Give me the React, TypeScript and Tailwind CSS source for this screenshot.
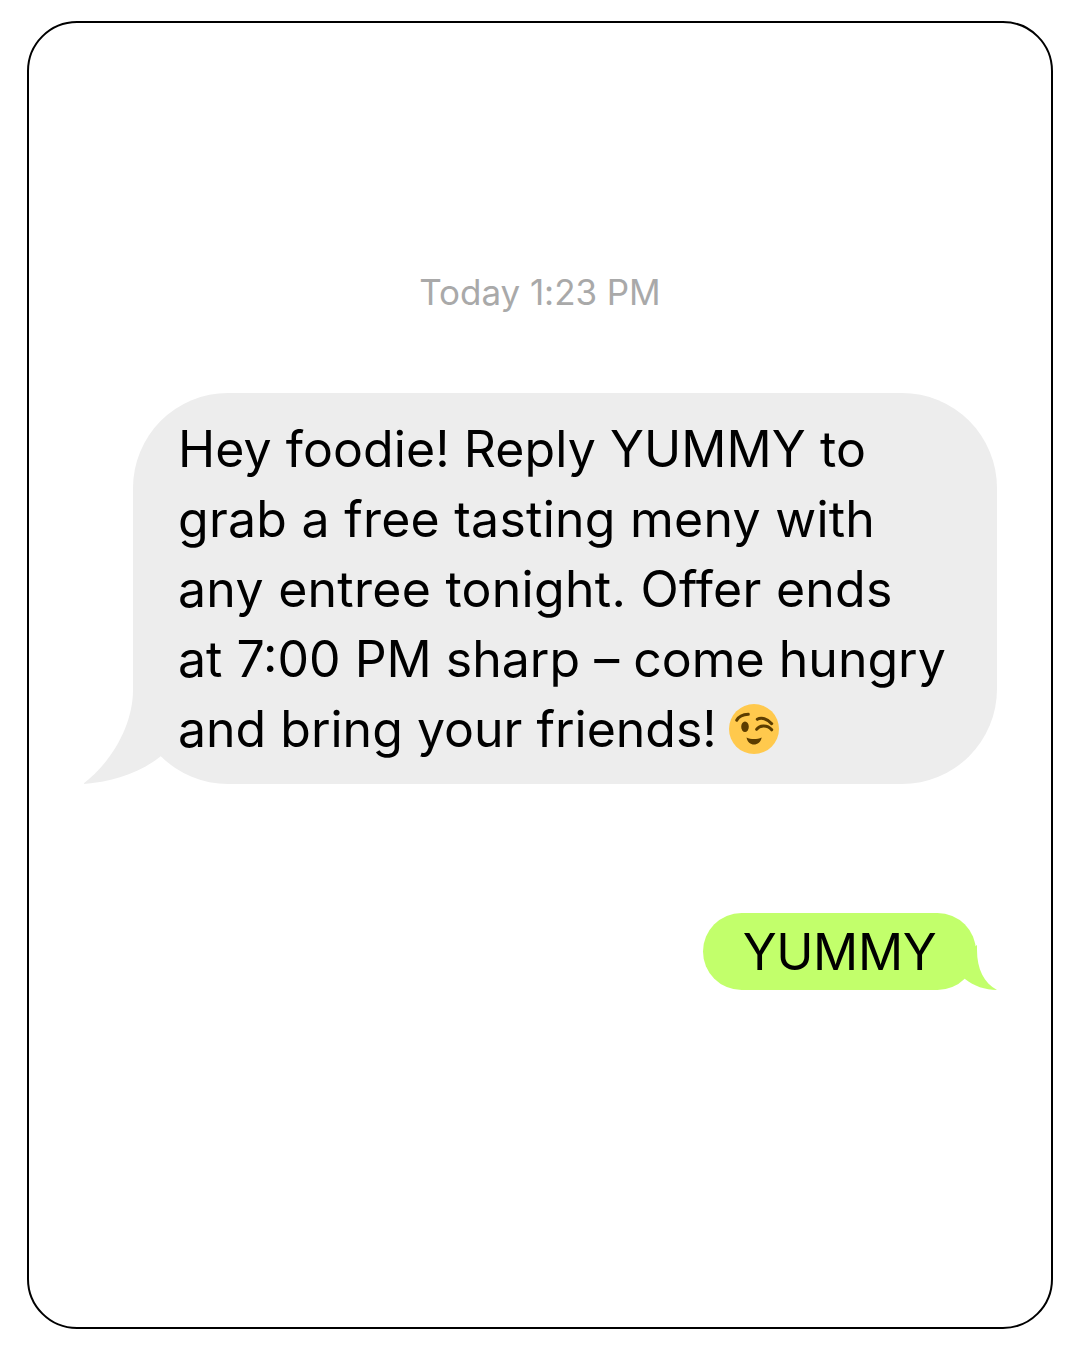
export default function App() {
  return (
    <div className="w-[1080px] h-[1350px] bg-white pt-[21px] px-[27px] font-['Inter',sans-serif]">
      <div className="h-[1308px] rounded-[50px] border-2 border-black pr-[54px] pl-[104px] flex flex-col">
        <div className="mt-[247px] -ml-[50px] text-center text-[35px] leading-[44px] text-[#a9a9a9] tracking-[-0.05px]">Today 1:23 PM</div>
        <div className="relative mt-[79px] h-[391px] rounded-[95px] bg-[#ededed] pl-[45px] pt-[21px] text-[50px] leading-[70px] text-black">
          <svg className="absolute left-[-50px] bottom-0" width="81" height="104" viewBox="0 0 81 104" fill="#ededed">
            <path d="M50 0V10C50 45 29 82 0 104C29 102 57 93 78 76L81 0Z" />
          </svg>
          <div className="relative whitespace-nowrap">
            <p className="tracking-[0.08px]">Hey foodie! Reply YUMMY to</p>
            <p className="tracking-[0.25px]">grab a free tasting meny with</p>
            <p className="tracking-[0.27px]">any entree tonight. Offer ends</p>
            <p>at 7:00 PM sharp – come hungry</p>
            <p>
              and bring your friends!{" "}
              <svg className="inline-block align-[-7px] -ml-[2px]" width="50" height="50" viewBox="0 0 50 50" fill="none">
                <circle cx="25" cy="25" r="25" fill="#ffc94d" />
                <path d="M7.7 16.3C9.5 13 14 10.6 19.3 10.3" stroke="#5c3d00" strokeWidth="3" strokeLinecap="round" />
                <path d="M28.3 15.3C32 13 38.5 14.5 42.7 19.7" stroke="#5c3d00" strokeWidth="3" strokeLinecap="round" />
                <ellipse cx="16" cy="22.7" rx="3.8" ry="5.2" fill="#5c3d00" />
                <path d="M27.7 25.3C30 21.5 38 20 42.7 25.8" stroke="#5c3d00" strokeWidth="3" strokeLinecap="round" />
                <path d="M17.5 33.5C22 35.5 28 35.5 32.7 33.5C32 38 28.5 40.5 25 40.5C21.5 40.5 18.3 38 17.5 33.5Z" fill="#5c3d00" />
              </svg>
            </p>
          </div>
        </div>
        <div className="relative mt-[129px] self-end mr-[21px] h-[77px] w-[273px] rounded-[38.5px] bg-[#c2ff6b] text-center text-[50px] leading-[79px] tracking-[-0.4px] text-black">
          <svg className="absolute right-[-21px] bottom-0" width="42" height="45" viewBox="0 0 42 45" fill="#c2ff6b">
            <path d="M22 0V5C22 24 29 38 42 45C30 45 19 41 10 34L0 15Z" />
          </svg>
          <span className="relative">YUMMY</span>
        </div>
      </div>
    </div>
  );
}
